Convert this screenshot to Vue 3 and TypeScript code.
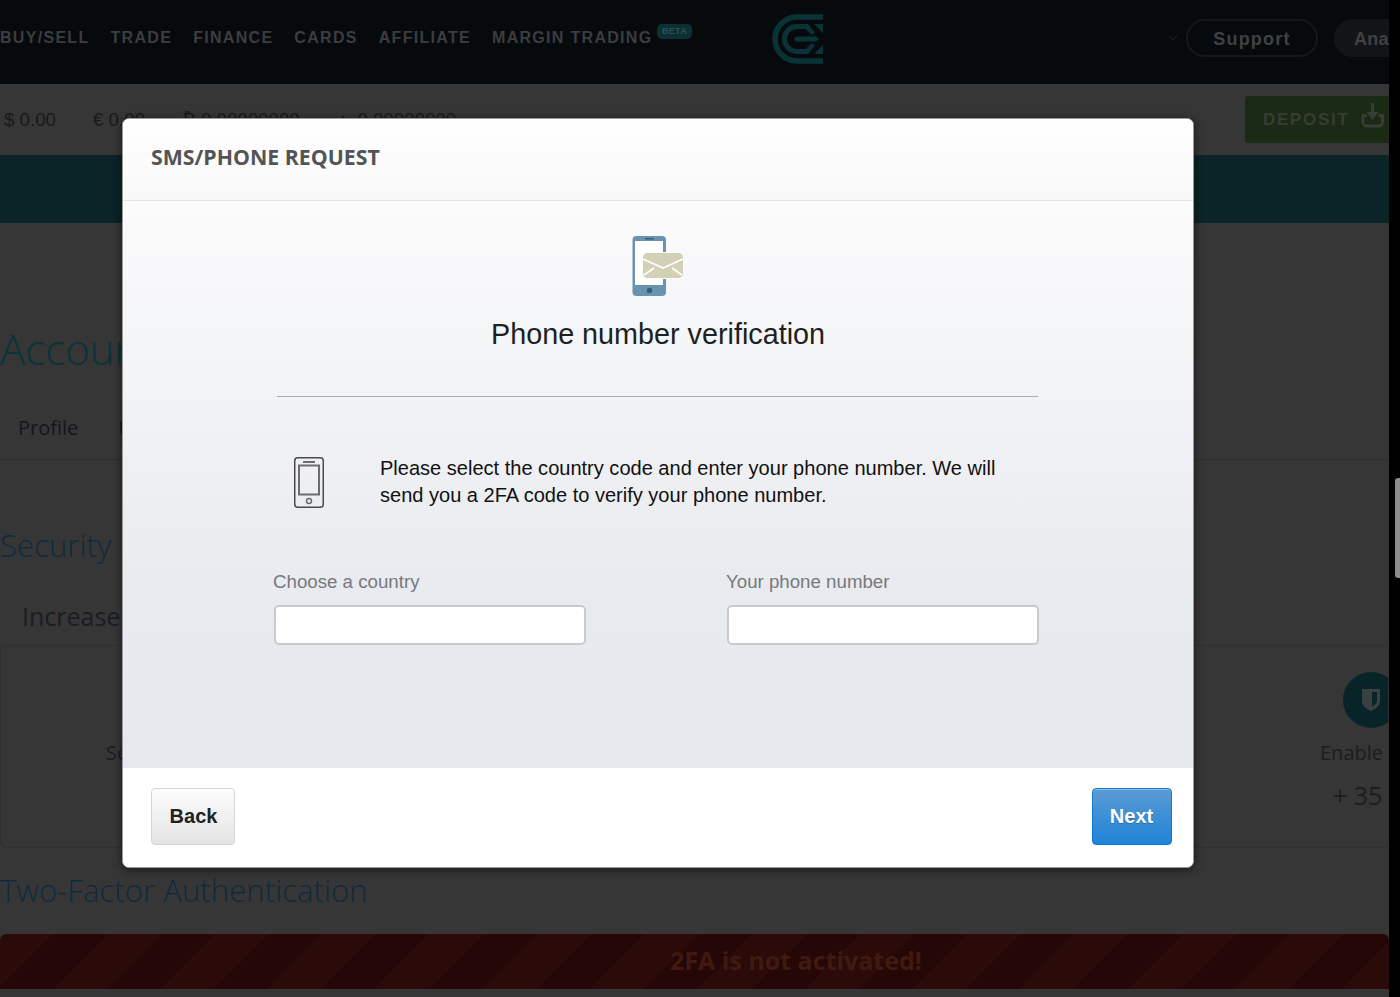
<script setup lang="ts">
const navItems: string[] = ['BUY/SELL', 'TRADE', 'FINANCE', 'CARDS', 'AFFILIATE'];
const balances: string[] = ['$ 0.00', '€ 0.00', '₿ 0.00000000', '▲ 0.00000000'];
</script>

<template>
  <div class="screen">
    <div class="page">
      <header class="topbar">
        <nav class="nav">
          <a v-for="item in navItems" :key="item" class="nav-item">{{ item }}</a>
          <a class="nav-item margin">MARGIN TRADING<span class="beta">BETA</span></a>
        </nav>
        <svg class="logo" width="52" height="52" viewBox="0 0 52 52" fill="none">
          <path d="M51 3H25A22 22 0 0 0 25 47H51" stroke="#0a3337" stroke-width="5.500" />
          <path d="M36 12.500H25A12.500 12.500 0 0 0 25 37.500H36" stroke="#0a3337" stroke-width="5" />
          <path d="M36 10H25V15H33.500L40 21L43 18.500ZM36 40H25V35H33.500L40 29L43 31.500Z" fill="#0a3337" />
          <path d="M25 22.500H44L47 25L44 27.500H25A2.500 2.500 0 0 1 25 22.500Z" fill="#0a3337" />
          <path d="M42 10H51V19ZM42 40H51V31Z" fill="#0a3337" />
        </svg>
        <div class="top-actions">
          <svg class="chev" width="10" height="6" viewBox="0 0 10 6" fill="none"><path d="M1 1l4 4 4-4" stroke="#23272a" stroke-width="1" /></svg>
          <a class="pill">Support</a>
          <a class="pill solid">Ana</a>
        </div>
      </header>

      <section class="balances">
        <span v-for="b in balances" :key="b" class="balance">{{ b }}</span>
        <a class="deposit">
          DEPOSIT
          <svg width="24" height="25" viewBox="0 0 24 25" fill="none">
            <path d="M11.500 0v11" stroke="#373c35" stroke-width="3" />
            <path d="M5.500 9h12l-6 8z" fill="#373c35" />
            <path d="M6 12.500H2v6.500a4 4 0 0 0 4 4h11.500a4 4 0 0 0 4-4v-6.500h-4" stroke="#373c35" stroke-width="3" />
          </svg>
        </a>
      </section>

      <div class="teal-band"></div>

      <main class="content">
        <h1 class="account">Account</h1>
        <div class="tabs"><span>Profile</span><span>User</span></div>
        <h2 class="security">Security</h2>
        <p class="increase">Increase your account security</p>
        <div class="card">
          <div class="card-left">Secure</div>
          <div class="card-right">
            <span class="shield-circle">
              <svg width="18" height="22" viewBox="0 0 18 22"><path fill-rule="evenodd" d="M0 0h18v12c0 5-4.500 8-9 10-4.500-2-9-5-9-10zM10 3v14.500c2.500-1.500 5-3 5-6V3z" fill="#3a3f40" /></svg>
            </span>
            <span class="enable">Enable</span>
            <span class="points">+ 35</span>
          </div>
        </div>
        <h2 class="twofa">Two-Factor Authentication</h2>
        <div class="alert">2FA is not activated!</div>
      </main>
    </div>

    <aside class="scrollbar"><span class="thumb"></span></aside>

    <div class="modal">
      <div class="modal-head">SMS/PHONE REQUEST</div>
      <div class="modal-body">
        <svg class="sms-icon" width="52" height="60" viewBox="0 0 52 60">
          <rect x="0.500" y="0" width="33.500" height="60" rx="4" fill="#6a93b0" />
          <rect x="3" y="5" width="28" height="44" fill="#fff" />
          <circle cx="17.500" cy="54.500" r="2.700" fill="#2f5f80" />
          <rect x="13" y="2" width="9" height="1.500" fill="#2f5f80" />
          <rect x="10.500" y="16.500" width="41" height="26" rx="5" fill="#d2d0b5" stroke="#fff" stroke-width="1" />
          <path d="M11 23l20 9 20-9M12 39l10-7M50 39l-10-7" stroke="#fff" stroke-width="1.800" fill="none" />
        </svg>
        <h3 class="verify-title">Phone number verification</h3>
        <hr class="rule" />
        <div class="intro">
          <svg class="phone-icon" width="30" height="51" viewBox="0 0 30 51" fill="none">
            <rect x="0.750" y="0.750" width="28.500" height="49.500" rx="3" stroke="#4a4a4c" stroke-width="1.500" />
            <rect x="5" y="8.500" width="20" height="29" stroke="#6d6d70" stroke-width="2" />
            <rect x="9" y="4" width="12" height="2" fill="#6d6d70" />
            <circle cx="15" cy="44" r="2.500" stroke="#6d6d70" stroke-width="1.500" />
          </svg>
          <p>Please select the country code and enter your phone number. We will send you a 2FA code to verify your phone number.</p>
        </div>
        <div class="fields">
          <label class="field"><span>Choose a country</span><input type="text" /></label>
          <label class="field"><span>Your phone number</span><input type="text" /></label>
        </div>
      </div>
      <div class="modal-foot">
        <button class="btn back" type="button">Back</button>
        <button class="btn next" type="button">Next</button>
      </div>
    </div>
  </div>
</template>

<style>
html, body { margin: 0; background: #363636; }
</style>

<style scoped>
.screen { position: relative; width: 1400px; height: 997px; overflow: hidden; display: flex; background: #363636; }
.page { width: 1389px; flex: none; overflow: hidden; display: flex; flex-direction: column; }
.scrollbar { width: 11px; flex: none; background: #000; display: flex; justify-content: flex-end; padding-top: 478px; box-sizing: border-box; }
.thumb { width: 5px; height: 100px; background: #8d8d8d; border-radius: 3px 0 0 3px; }

.topbar { height: 84px; flex: none; background: #060a0d; display: flex; align-items: center; position: relative; }
.nav { display: flex; gap: 21px; width: 772px; flex: none; font: 700 16px "Liberation Sans", sans-serif; letter-spacing: 1.300px; color: #3b3d3f; }
.nav-item { white-space: nowrap; margin-top: -8px; }
.margin { position: relative; }
.beta { position: absolute; left: 165px; top: -5px; width: 35px; height: 15px; border-radius: 5px; background: #0c3034; color: #2b5054; font: 700 9px/15px "Liberation Sans", sans-serif; letter-spacing: 0.300px; text-align: center; }
.logo { margin-top: -5px; flex: none; }
.top-actions { margin-left: auto; display: flex; align-items: center; gap: 16px; margin-top: -8px; width: 219px; flex: none; }
.chev { margin-right: -8px; margin-left: -2px; flex: none; }
.pill { flex: none; width: 132px; height: 38px; box-sizing: border-box; border: 2px solid #15181b; border-radius: 19px; color: #3f4143; font: 700 18px/36px "Liberation Sans", sans-serif; letter-spacing: 1.250px; text-align: center; white-space: nowrap; }
.pill.solid { width: 55px; background: #121417; border-color: #121417; text-align: left; padding-left: 18px; border-radius: 19px 0 0 19px; letter-spacing: 0.200px; }

.balances { height: 71px; flex: none; box-sizing: border-box; background: #363636; display: flex; align-items: center; padding-left: 4px; position: relative; font: 400 18.700px "Liberation Sans", sans-serif; color: #17191b; }
.balance { margin-right: 37px; white-space: nowrap; margin-top: 1px; }
.balance:nth-child(3) { margin-right: 34px; }
.deposit { margin-left: auto; width: 144px; height: 47px; box-sizing: border-box; margin-top: -1px; padding-top: 2px; background: #1b2a14; border-radius: 3px 0 0 3px; display: flex; align-items: center; gap: 11px; padding-left: 18px; color: #373c35; font: 700 17px "Liberation Sans", sans-serif; letter-spacing: 1.700px; }
.deposit svg { margin-top: -10px; flex: none; }

.teal-band { height: 68px; flex: none; background: #0b2428; }

.content { flex: 1; background: #363636; font-family: "Open Sans", sans-serif; min-height: 0; }
.account { margin: 96px 0 0; font-size: 42px; font-weight: 300; line-height: 60px; color: #07333a; white-space: nowrap; }
.tabs { margin-top: 34px; height: 47px; box-sizing: border-box; padding-left: 18px; display: flex; gap: 40px; border-bottom: 1px solid #2f2f2f; font-size: 20px; line-height: 30px; color: #11171c; }
.security { margin: 63px 0 0; font-size: 31.200px; font-weight: 300; line-height: 44px; color: #0f2a3f; }
.increase { margin: 32px 0 0 22px; font-size: 25px; line-height: 34px; color: #1a1d21; white-space: nowrap; }
.card { margin-top: 12px; height: 203px; box-sizing: border-box; border: 1px solid #303030; border-radius: 6px; display: flex; justify-content: space-between; overflow: hidden; }
.card-left { margin: 93px 0 0 105px; font-size: 20px; line-height: 28px; color: #1a1d21; }
.card-right { width: 68px; flex: none; display: flex; flex-direction: column; white-space: nowrap; padding-top: 26px; }
.shield-circle { width: 56px; height: 56px; margin-left: 23px; border-radius: 50%; background: #082428; display: flex; align-items: center; justify-content: center; flex: none; }
.enable { margin-top: 11px; font-size: 20px; line-height: 28px; color: #1a1d21; }
.points { margin: 10px 0 0 13px; font-size: 25px; line-height: 36px; color: #1a1d21; }
.twofa { margin: 20px 0 0; font-size: 31.200px; font-weight: 300; line-height: 44px; color: #0f2a3f; white-space: nowrap; }
.alert { margin-top: 22px; height: 55px; padding-left: 203px; border-radius: 6px 6px 0 0; text-align: center; font: 700 25px/53px "Open Sans", sans-serif; color: #40190f; background: repeating-linear-gradient(135deg, #2a0b09 0 38px, #240706 38px 76px); }

.modal { position: absolute; left: 122px; top: 118px; width: 1072px; height: 750px; box-sizing: border-box; display: flex; flex-direction: column; background: #fff; border: 1px solid #9a9a9a; border-radius: 7px; box-shadow: 0 2px 10px rgba(0, 0, 0, 0.55); overflow: hidden; }
.modal-head { height: 82px; flex: none; box-sizing: border-box; padding: 23px 0 0 28px; background: linear-gradient(#fff, #f8f8f9); border-bottom: 1px solid #e4e5e6; font: 700 21.300px/30px "Open Sans", sans-serif; color: #545454; white-space: nowrap; }
.modal-body { flex: 1; min-height: 0; display: flex; flex-direction: column; background: linear-gradient(#fbfbfc, #e7eaee 72%, #e6e9ed); font-family: "Liberation Sans", sans-serif; }
.sms-icon { align-self: center; margin: 35px 0 0 0; flex: none; }
.verify-title { margin: 20px 0 0; text-align: center; font-size: 28.750px; font-weight: 400; line-height: 36px; color: #1d1f21; white-space: nowrap; }
.rule { width: 761px; margin: 44px 0 0 154px; border: 0; border-top: 1px solid #a9abad; height: 0; }
.intro { display: flex; margin: 60px 0 0 171px; align-items: flex-start; gap: 56px; }
.phone-icon { flex: none; }
.intro p { margin: -2px 0 0; width: 640px; font-size: 20.050px; line-height: 27px; color: #111; }
.fields { display: flex; gap: 140.600px; margin: 61px 0 0 151px; }
.field { display: flex; flex-direction: column; width: 312.400px; }
.field span { font-size: 18.720px; line-height: 24px; color: #77787c; margin-left: -1px; white-space: nowrap; }
.field input { margin-top: 11px; height: 40px; width: 312.400px; padding: 0; box-sizing: border-box; border: 2px solid #c9cacd; border-radius: 5px; background: #fff; outline: none; }
.modal-foot { height: 99px; flex: none; box-sizing: border-box; background: #fff; display: flex; justify-content: space-between; align-items: flex-start; padding: 20px 21px 0 28px; }
.btn { font: 700 20px "Liberation Sans", sans-serif; border-radius: 4px; cursor: pointer; box-sizing: border-box; }
.back { width: 84px; height: 57px; padding: 0 0 0 1px; color: #222; border: 1px solid #d6d6d6; background: linear-gradient(#fdfdfd, #e4e4e4); }
.next { width: 80px; height: 57px; padding: 0 1px 0 0; color: #fff; border: 1px solid #0f7ad2; background: linear-gradient(#5c9bd4, #1f84d8); box-shadow: inset 0 1px 0 rgba(255, 255, 255, 0.35); text-shadow: 0 1px 1px rgba(0, 0, 0, 0.25); }
</style>
